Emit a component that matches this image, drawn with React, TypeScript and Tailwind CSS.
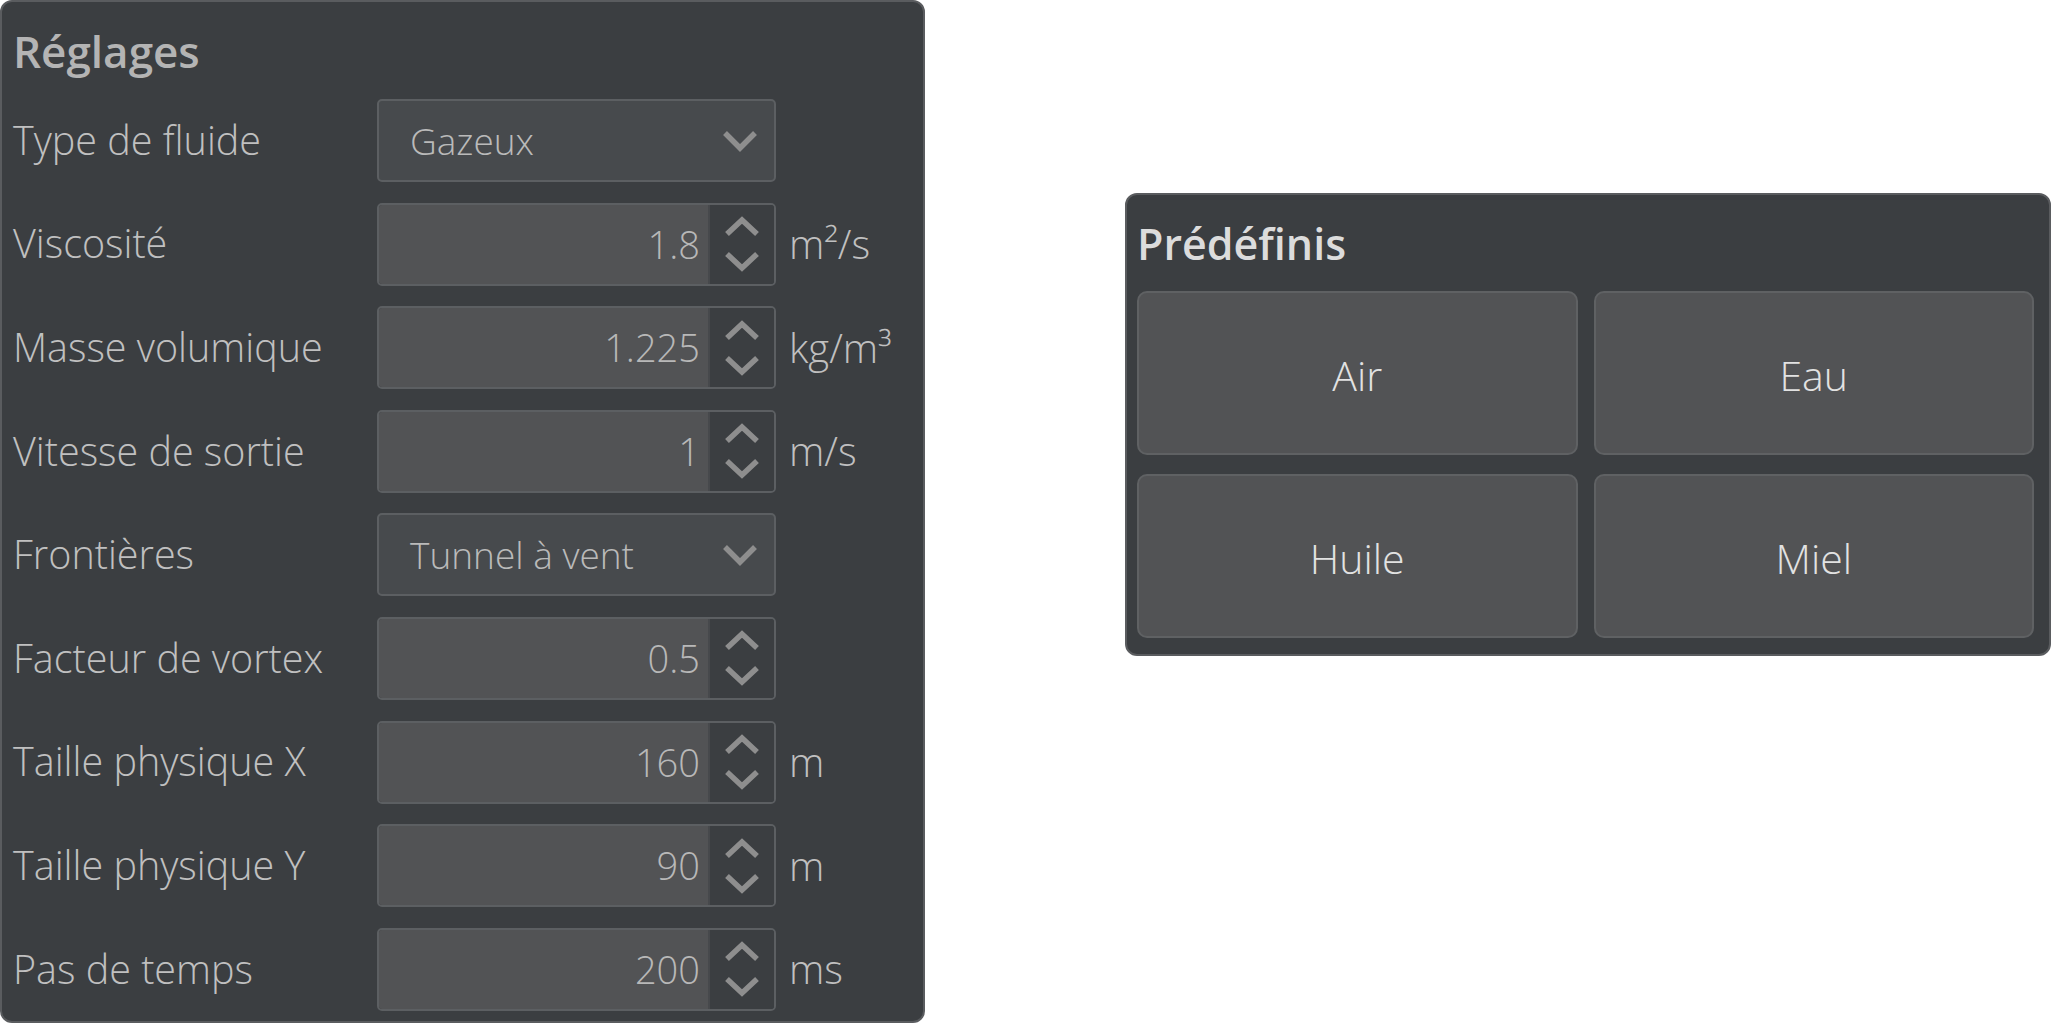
import React from "react";

const font = { fontFamily: '"Open Sans", "Noto Sans", sans-serif' };

type Row =
  | { kind: "combo"; label: string; value: string }
  | { kind: "spin"; label: string; value: string; unit?: string };

const rows: Row[] = [
  { kind: "combo", label: "Type de fluide", value: "Gazeux" },
  { kind: "spin", label: "Viscosité", value: "1.8", unit: "m²/s" },
  { kind: "spin", label: "Masse volumique", value: "1.225", unit: "kg/m³" },
  { kind: "spin", label: "Vitesse de sortie", value: "1", unit: "m/s" },
  { kind: "combo", label: "Frontières", value: "Tunnel à vent" },
  { kind: "spin", label: "Facteur de vortex", value: "0.5" },
  { kind: "spin", label: "Taille physique X", value: "160", unit: "m" },
  { kind: "spin", label: "Taille physique Y", value: "90", unit: "m" },
  { kind: "spin", label: "Pas de temps", value: "200", unit: "ms" },
];

const ComboBox = ({ value }: { value: string }) => (
  <div className="w-[399px] h-[83px] flex items-center justify-between rounded-[5px] border-2 border-[#5c5f62] bg-[#474a4d] pl-[31px] pr-[16px]">
    <span className="text-[37px] font-[350] text-[#bababa]">{value}</span>
    <svg width="36" height="22" viewBox="0 0 36 22" fill="none">
      <polyline points="3,3 18,18 33,3" stroke="#8e8e8e" strokeWidth="5.5" />
    </svg>
  </div>
);

const SpinBox = ({ value }: { value: string }) => (
  <div className="w-[399px] h-[83px] flex rounded-[5px] border-2 border-[#5c5f62] overflow-hidden">
    <div className="flex-1 flex items-center justify-end bg-[#525355] pr-[8px]">
      <span className="text-[38px] font-[350] text-[#b8b8b8]">{value}</span>
    </div>
    <div className="w-[66px] flex items-center justify-center bg-[#3b3e41] border-l-2 border-[#47494c]">
      <svg width="36" height="56" viewBox="0 0 36 56" fill="none">
        <polyline points="3,18 18,4 33,18" stroke="#8e8e8e" strokeWidth="5.5" />
        <polyline points="3,38 18,52 33,38" stroke="#8e8e8e" strokeWidth="5.5" />
      </svg>
    </div>
  </div>
);

const PresetButton = ({ label }: { label: string }) => (
  <button className="h-[164px] rounded-[10px] border-2 border-[#5f6163] bg-[#525355] pt-[6px] text-[41px] font-[350] text-[#e2e2e2]">
    {label}
  </button>
);

export default function App() {
  return (
    <div className="w-[2052px] h-[1024px] bg-white flex items-start" style={font}>
      <div className="w-[925px] h-[1023px] rounded-[12px] border-2 border-[#5a5c5f] bg-[#3b3e41] pl-[11px] pt-[9px]">
        <div className="h-[80px] flex items-center text-[44px] font-semibold leading-none text-[#b4b4b4]">
          Réglages
        </div>
        <div className="flex flex-col gap-[20.6px] mt-[8px]">
          {rows.map((r) => (
            <div key={r.label} className="flex items-center">
              <div className="w-[364px] text-[39.5px] font-[350] text-[#c0c0c0]">{r.label}</div>
              {r.kind === "combo" ? (
                <ComboBox value={r.value} />
              ) : (
                <SpinBox value={r.value} />
              )}
              {r.kind === "spin" && r.unit && (
                <span className="ml-[13px] text-[40px] font-[350] text-[#c0c0c0]">{r.unit}</span>
              )}
            </div>
          ))}
        </div>
      </div>

      <div className="ml-[200px] mt-[193px] w-[926px] h-[463px] rounded-[12px] border-2 border-[#5a5c5f] bg-[#3b3e41] pl-[10px] pr-[15px] pt-[8px]">
        <div className="h-[80px] flex items-center text-[43px] font-semibold leading-none text-[#dcdcdc]">
          Prédéfinis
        </div>
        <div className="grid grid-cols-2 gap-x-[16px] gap-y-[19px] mt-[8px]">
          <PresetButton label="Air" />
          <PresetButton label="Eau" />
          <PresetButton label="Huile" />
          <PresetButton label="Miel" />
        </div>
      </div>
    </div>
  );
}
